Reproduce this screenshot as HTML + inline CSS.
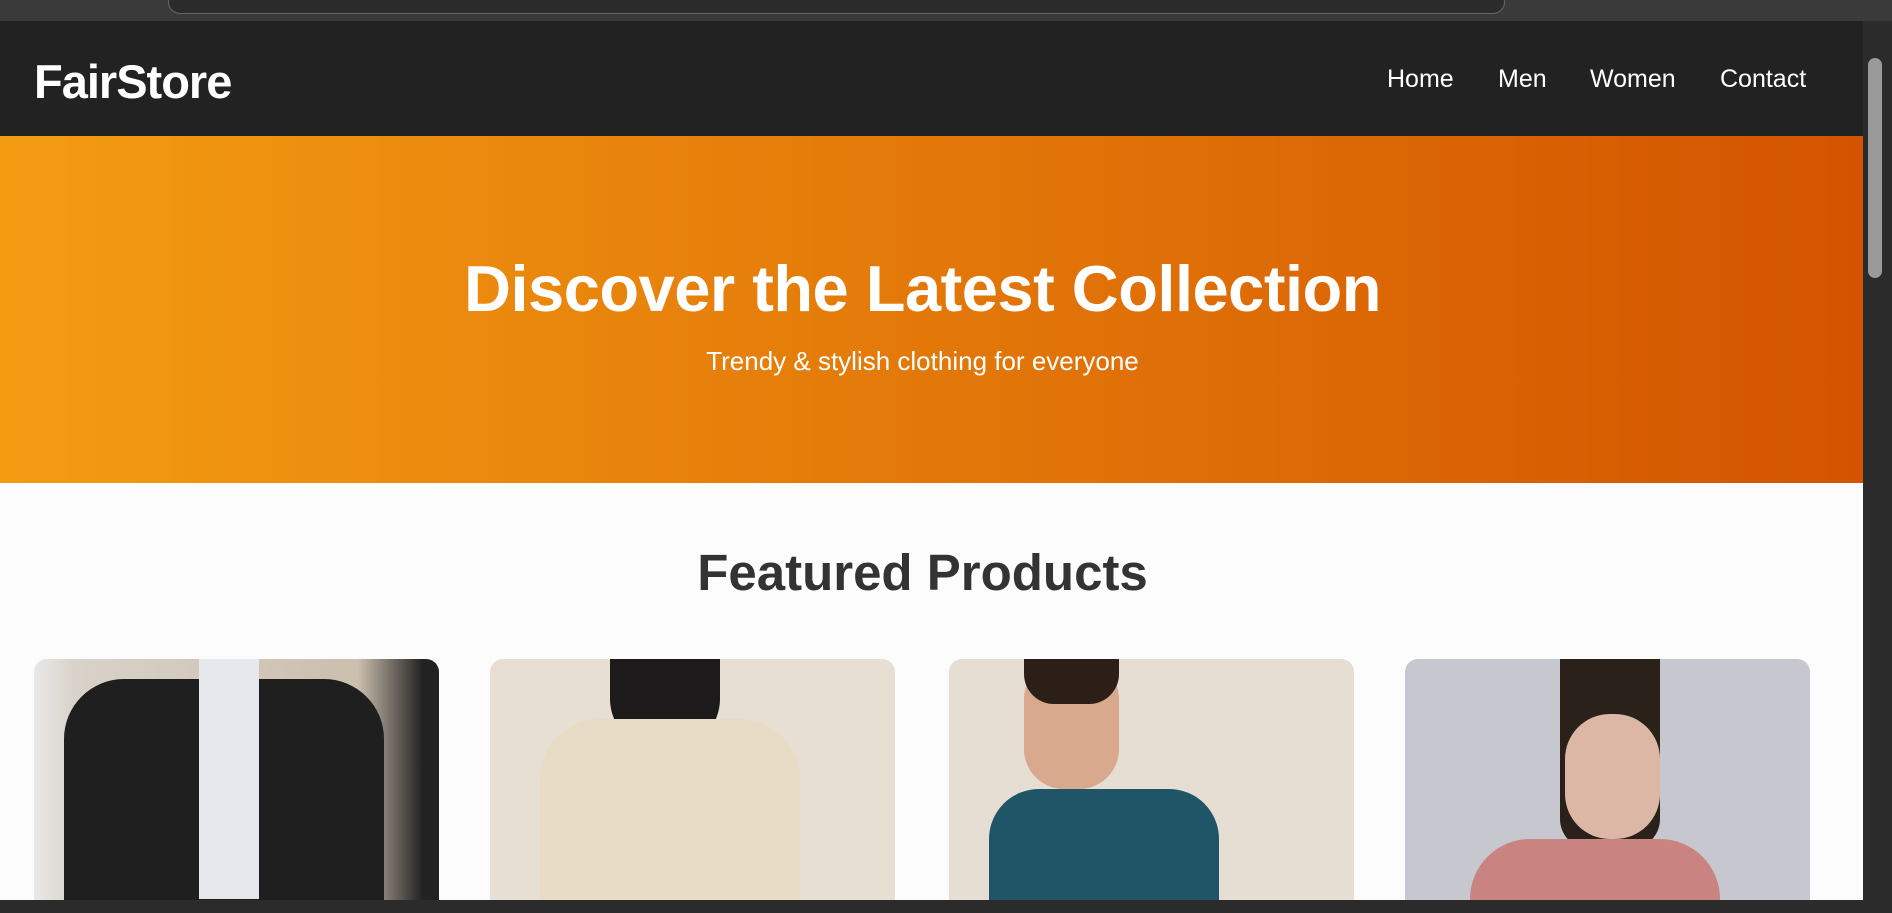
<!DOCTYPE html>
<html><head><meta charset="utf-8"><style>
*{margin:0;padding:0;box-sizing:border-box}
body{width:1892px;height:913px;overflow:hidden;background:#fcfcfc;font-family:"Liberation Sans",sans-serif;position:relative}
.chrome{position:absolute;left:0;top:0;width:1892px;height:21px;background:#3a3a3a}
.url{position:absolute;left:168px;top:-10px;width:1337px;height:24px;border:1px solid #666;border-radius:14px;background:#2b2b2b}
.nav{position:absolute;left:0;top:21px;width:1863px;height:115px;background:#222}
.logo{position:absolute;left:34px;top:33px;color:#fff;font-weight:bold;font-size:47px;letter-spacing:-1px}
.links{position:absolute;top:44px;color:#fff;font-size:25px}
.hero{position:absolute;left:0;top:136px;width:1863px;height:347px;background:linear-gradient(90deg,#f39c12,#d35400)}
.hero h1{position:absolute;top:115px;width:1845px;text-align:center;color:#fff;font-size:65px;font-weight:bold;letter-spacing:-.5px}
.hero p{position:absolute;top:210px;width:1845px;text-align:center;color:#fff;font-size:26px}
h2{position:absolute;top:543px;left:0;width:1845px;text-align:center;color:#333;font-size:51px;font-weight:bold}
.card{position:absolute;top:659px;width:405px;height:241px;border-radius:13px 13px 0 0;overflow:hidden}
.sb{position:absolute;left:1863px;top:21px;width:29px;height:879px;background:#2b2b2b}
.thumb{position:absolute;left:1868px;top:58px;width:14px;height:220px;background:#9a9a9a;border-radius:7px}
.bottom{position:absolute;left:0;top:900px;width:1892px;height:13px;background:#2b2b2b}
</style></head><body>
<div class="chrome"><div class="url"></div></div>
<div class="nav">
<div class="logo">FairStore</div>
<div class="links" style="left:1387px">Home</div>
<div class="links" style="left:1498px">Men</div>
<div class="links" style="left:1590px">Women</div>
<div class="links" style="left:1720px">Contact</div>
</div>
<div class="hero"><h1>Discover the Latest Collection</h1><p>Trendy &amp; stylish clothing for everyone</p></div>
<h2>Featured Products</h2>
<div class="card" style="left:34px;background:linear-gradient(90deg,#e8e8e8 0,#d9d2c9 10%,#cbbfae 80%,#222 96%)">
<div style="position:absolute;left:30px;top:20px;width:320px;height:230px;background:#1f1f1f;border-radius:60px 60px 0 0"></div>
<div style="position:absolute;left:165px;top:0;width:60px;height:240px;background:#e6e8ee"></div>
</div>
<div class="card" style="left:490px;background:#e8dfd4">
<div style="position:absolute;left:120px;top:0;width:110px;height:90px;background:#1c1a1a;border-radius:0 0 50px 50px"></div>
<div style="position:absolute;left:50px;top:60px;width:260px;height:190px;background:#e9dcc6;border-radius:60px 60px 0 0"></div>
</div>
<div class="card" style="left:949px;background:#e6ddd3">
<div style="position:absolute;left:75px;top:0;width:95px;height:130px;background:#d9a98d;border-radius:40px"></div>
<div style="position:absolute;left:75px;top:0;width:95px;height:45px;background:#2b1f18;border-radius:0 0 30px 30px"></div>
<div style="position:absolute;left:40px;top:130px;width:230px;height:120px;background:#1f5566;border-radius:50px 50px 0 0"></div>
</div>
<div class="card" style="left:1405px;background:#c6c7cf">
<div style="position:absolute;left:155px;top:0;width:100px;height:190px;background:#2a211b;border-radius:0 0 30px 30px"></div>
<div style="position:absolute;left:160px;top:55px;width:95px;height:125px;background:#dcb7a5;border-radius:45px"></div>
<div style="position:absolute;left:65px;top:180px;width:250px;height:70px;background:#c98482;border-radius:60px 60px 0 0"></div>
</div>
<div class="sb"></div><div class="thumb"></div>
<div class="bottom"></div>
</body></html>
